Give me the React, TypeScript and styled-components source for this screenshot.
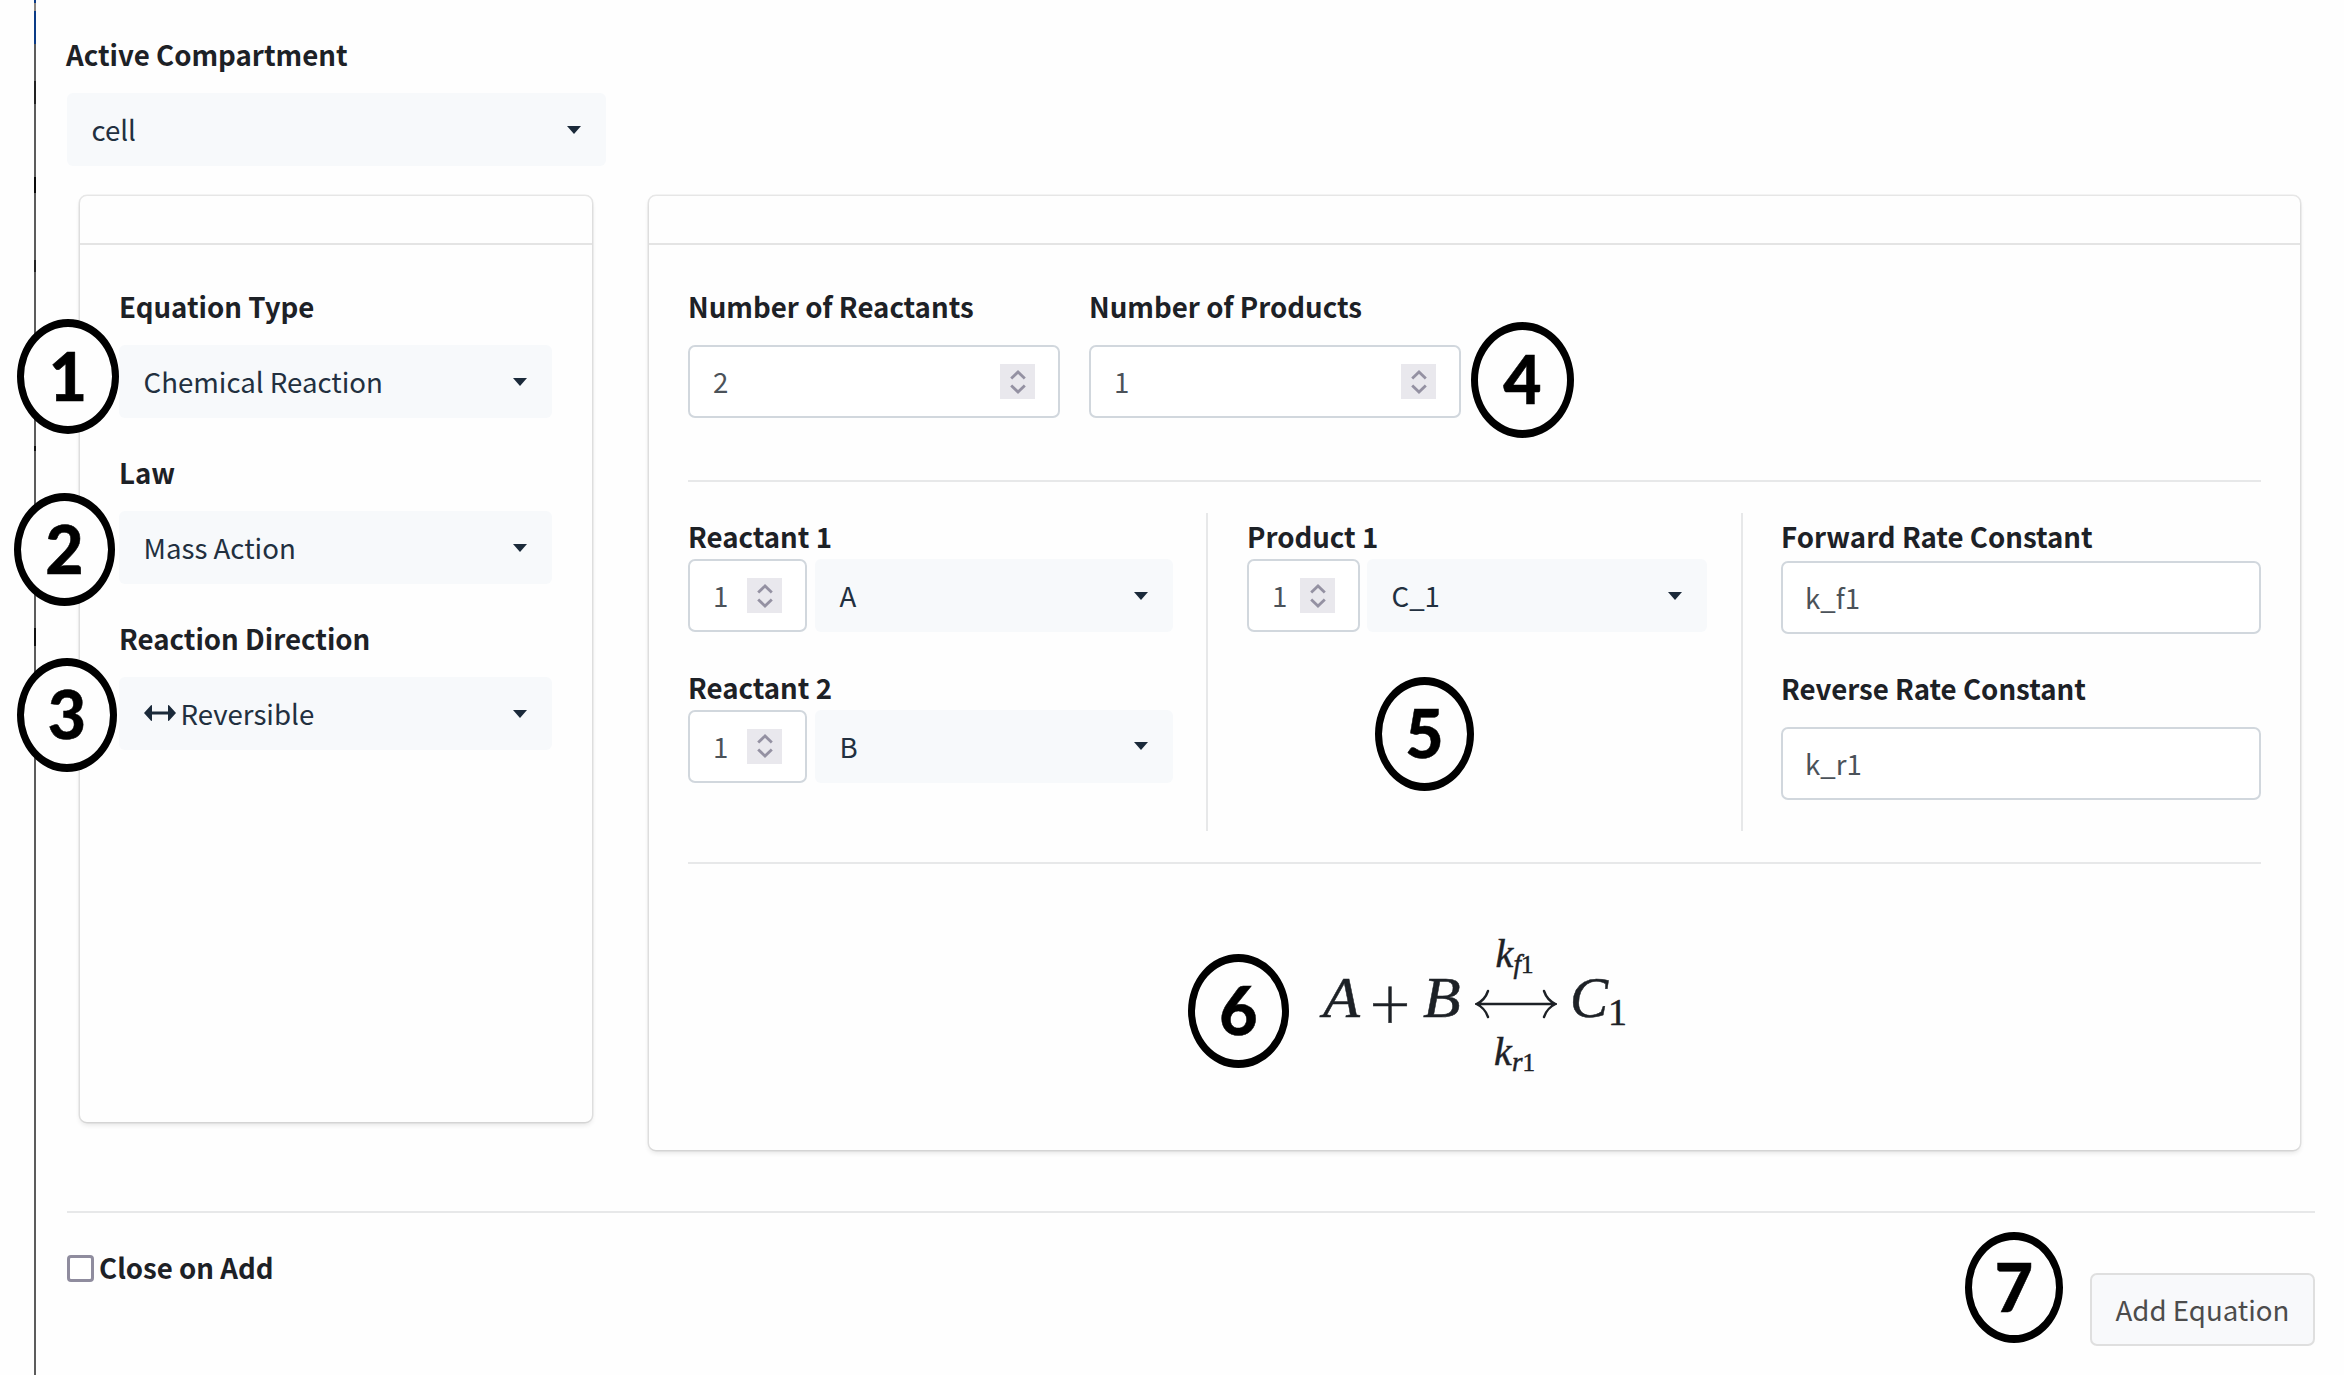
import React from 'react';
import styled, { createGlobalStyle } from 'styled-components';

const GlobalStyle = createGlobalStyle`
  *, *::before, *::after { box-sizing: border-box; }
  body {
    margin: 0;
    background: #fefefe;
    color: #1d2126;
    font-family: 'Noto Sans CJK SC', 'Noto Sans', sans-serif;
    font-size: 27.65px;
  }
`;

const Page = styled.div`
  position: relative;
  display: flex;
  width: 2344px;
  height: 1375px;
  overflow: hidden;
  padding-left: 34px;
`;

const Edge = styled.div`
  width: 2px;
  flex: none;
  background: linear-gradient(
    to bottom,
    #0b3b86 0 3px, #8a8580 3px 11px, #0b3b86 11px 44px, #5c5c5c 44px 81px, #222 81px 104px,
    #5c5c5c 104px 177px, #0a0a0a 177px 193px, #5c5c5c 193px 260px, #222 260px 272px, #5c5c5c 272px 446px,
    #111 446px 451px, #5c5c5c 451px 628px, #111 628px 646px, #5c5c5c 646px
  );
`;

const Panel = styled.main`
  display: flex;
  flex-direction: column;
  width: 2279px;
  padding: 34px 0 0 31px;
`;

const Label = styled.label<{ $gap?: number; $shift?: number }>`
  display: block;
  height: 40px;
  margin: 0 0 ${p => p.$gap ?? 19}px ${p => p.$shift ?? 0}px;
  line-height: 40px;
  font-weight: 700;
  white-space: nowrap;
`;

const SelectBox = styled.div<{ $w?: number }>`
  display: flex;
  align-items: center;
  ${p => (p.$w ? `width: ${p.$w}px;` : 'flex: 1;')}
  height: 73px;
  padding: 0 25.5px 0 24.5px;
  border-radius: 6px;
  background: #f7f9fb;
  color: #22303f;
  line-height: 40px;
`;

const SelectText = styled.span`
  flex: 1;
  padding-bottom: 1px;
  white-space: nowrap;
`;

const Caret = styled.i`
  border: 7px solid transparent;
  border-top: 8px solid #1b2a3a;
  border-bottom: 0;
`;

const InputBox = styled.div<{ $w?: number }>`
  display: flex;
  align-items: center;
  justify-content: space-between;
  ${p => (p.$w ? `width: ${p.$w}px;` : '')}
  height: 73px;
  padding: 0 23px 1px ${p => (p.$w ? 23 : 22)}px;
  border: 2px solid #d1d7dd;
  border-radius: 7px;
  background: #fff;
  color: #4b5259;
  line-height: 40px;
`;

const SpinnerBox = styled.span`
  display: grid;
  place-items: center;
  width: 35px;
  height: 35px;
  margin-top: 1px;
  background: #e9e8ed;
`;

const Cards = styled.div`
  display: flex;
  align-items: flex-start;
  gap: 57px;
  margin-top: 30px;
  padding-left: 13px;
`;

const Card = styled.section<{ $w: number; $h: number }>`
  width: ${p => p.$w}px;
  height: ${p => p.$h}px;
  border-radius: 7px;
  background: #fefefe;
  box-shadow: 0 3px 5px rgba(10, 10, 10, 0.1), 0 0 0 1.5px rgba(10, 10, 10, 0.09);
`;

const CardHeader = styled.header`
  height: 49px;
  border-bottom: 2px solid #e4e4e4;
`;

const TypeFields = styled.div`
  display: flex;
  flex-direction: column;
  gap: 34px;
  padding: 41px 40px 0 39px;
`;

const Field = styled.div`
  display: flex;
  flex-direction: column;
`;

const FieldSelect = styled.div`
  display: flex;
`;

const CountRow = styled.div`
  display: flex;
  gap: 29px;
  padding: 41px 39px 62px;
`;

const Rule = styled.hr<{ $inset?: number }>`
  height: 2px;
  margin: 0 ${p => p.$inset ?? 0}px;
  border: 0;
  background: #e7e8e9;
`;

const Columns = styled.div`
  display: grid;
  grid-template-columns: 520px 534.5px 1fr;
  height: 318px;
  margin: 31px 39px 31px 39px;
`;

const Column = styled.div<{ $gap?: number; $line?: boolean; $pad?: number }>`
  display: flex;
  flex-direction: column;
  gap: ${p => p.$gap ?? 34}px;
  padding: 3px 0 0 ${p => p.$pad ?? 0}px;
  ${p => (p.$line ? 'border-right: 2px solid #e7e8e9;' : '')}
`;

const Species = styled.div<{ $gap: number; $w: number }>`
  display: flex;
  gap: ${p => p.$gap}px;
  width: ${p => p.$w}px;
`;

const Formula = styled.div`
  display: flex;
  align-items: center;
  height: 146px;
  margin-top: 67px;
  padding-left: 674px;
  color: #1d2126;
  font-family: 'Liberation Serif', serif;
  -webkit-text-stroke: 0.5px currentColor;
`;

const Sym = styled.span<{ $ml?: number; $stretch?: number }>`
  width: 35px;
  margin-left: ${p => p.$ml ?? 0}px;
  padding-bottom: 13px;
  font-size: 57px;
  font-style: italic;
  line-height: 60px;
  white-space: nowrap;
  transform: scaleX(${p => p.$stretch ?? 1});
  transform-origin: left;
`;

const Plus = styled.span`
  width: 63px;
  padding: 0 0 9px 1px;
  font-family: 'Noto Sans CJK SC', sans-serif;
  font-size: 75px;
  font-weight: 100;
  line-height: 60px;
  text-align: center;
`;

const Sub = styled.sub<{ $s: number; $drop: number; $roman?: boolean }>`
  font-size: ${p => p.$s}px;
  font-style: ${p => (p.$roman ? 'normal' : 'italic')};
  line-height: 0;
  vertical-align: -${p => p.$drop}px;
`;

const ArrowStack = styled.span`
  display: flex;
  flex-direction: column;
  align-items: center;
  width: 82px;
  height: 146px;
  margin-left: 17px;
`;

const RateLabel = styled.span`
  height: 44px;
  padding-right: 3px;
  font-size: 40px;
  font-style: italic;
  line-height: 46px;
`;

const ArrowDrawing = styled.svg`
  flex: none;
  width: 82px;
  height: 40px;
  margin: 9px 0 5px;
`;

const FooterRule = styled(Rule)`
  margin-top: 61px;
`;

const Footer = styled.footer`
  display: flex;
  justify-content: space-between;
  align-items: flex-start;
`;

const CheckRow = styled.label`
  display: flex;
  align-items: center;
  gap: 5px;
  height: 40px;
  margin-top: 34px;
  line-height: 40px;
  font-weight: 700;
`;

const CheckSquare = styled.span`
  width: 27px;
  height: 27px;
  margin-top: 3px;
  border: 3px solid #8f8c9e;
  border-radius: 4px;
  background: #fff;
`;

const AddButton = styled.button`
  width: 225px;
  height: 73px;
  margin-top: 60px;
  padding: 0 0 2px;
  border: 2px solid #dfdfdf;
  border-radius: 7px;
  background: #f8f9fb;
  color: #4c4c4c;
  font: inherit;
  line-height: 40px;
`;

const Badge = styled.span<{ $x: number; $y: number; $w: number; $h: number }>`
  position: absolute;
  left: ${p => p.$x}px;
  top: ${p => p.$y}px;
  display: grid;
  place-items: center;
  width: ${p => p.$w}px;
  height: ${p => p.$h}px;
  padding-bottom: 2px;
  border: solid #000;
  border-width: 8px 7.5px;
  border-radius: 50%;
  background: #fefefe;
  color: #000;
  font: 900 66px/66px Lato, sans-serif;
  -webkit-text-stroke: 0.5px #000;
`;

const Select = ({ children, w }: { children: React.ReactNode; w?: number }) => (
  <SelectBox $w={w}>
    <SelectText>{children}</SelectText>
    <Caret />
  </SelectBox>
);

const NumberInput = ({ value, w }: { value: number; w: number }) => (
  <InputBox $w={w}>
    <span>{value}</span>
    <SpinnerBox>
      <svg width="16" height="24" viewBox="0 0 16 24" fill="none" stroke="#9491a2" strokeWidth="2.8">
        <path d="M1.2 8.6 8 2l6.8 6.6M1.2 15.4 8 22l6.8-6.6" />
      </svg>
    </SpinnerBox>
  </InputBox>
);

const BothWays = styled.svg`
  width: 32px;
  height: 18px;
  margin: 0 5px 0 0;
  vertical-align: 3px;
`;

const BothWaysIcon = () => (
  <BothWays viewBox="0 0 32 18" fill="#1b2a3a">
    <path d="M0 9 7 1.2Q8 .6 8 2v5.5h16V2q0-1.4 1-.8L32 9l-7 7.8q-1 .6-1-.8v-5.5H8V16q0 1.4-1 .8z" />
  </BothWays>
);

const badges = [
  { x: 17, y: 319, w: 102, h: 115 },
  { x: 14, y: 493, w: 101, h: 113 },
  { x: 17, y: 658, w: 100, h: 114 },
  { x: 1471, y: 322, w: 103, h: 116 },
  { x: 1375, y: 677, w: 99, h: 114 },
  { x: 1188, y: 954, w: 101, h: 114 },
  { x: 1965, y: 1232, w: 98, h: 111 },
];

export default function App() {
  return (
    <Page>
      <GlobalStyle />
      <Edge />
      <Panel>
        <Label $shift={-1}>Active Compartment</Label>
        <Select w={539}>cell</Select>
        <Cards>
          <Card $w={512} $h={926}>
            <CardHeader />
            <TypeFields>
              <Field>
                <Label>Equation Type</Label>
                <FieldSelect><Select>Chemical Reaction</Select></FieldSelect>
              </Field>
              <Field>
                <Label>Law</Label>
                <FieldSelect><Select>Mass Action</Select></FieldSelect>
              </Field>
              <Field>
                <Label>Reaction Direction</Label>
                <FieldSelect><Select><BothWaysIcon />Reversible</Select></FieldSelect>
              </Field>
            </TypeFields>
          </Card>
          <Card $w={1651} $h={954}>
            <CardHeader />
            <CountRow>
              <Field>
                <Label>Number of Reactants</Label>
                <NumberInput value={2} w={372} />
              </Field>
              <Field>
                <Label>Number of Products</Label>
                <NumberInput value={1} w={372} />
              </Field>
            </CountRow>
            <Rule $inset={39} />
            <Columns>
              <Column $line $gap={34.5}>
                <Field>
                  <Label $gap={3}>Reactant 1</Label>
                  <Species $gap={8} $w={485}>
                    <NumberInput value={1} w={119} />
                    <Select>A</Select>
                  </Species>
                </Field>
                <Field>
                  <Label $gap={3}>Reactant 2</Label>
                  <Species $gap={8} $w={485}>
                    <NumberInput value={1} w={119} />
                    <Select>B</Select>
                  </Species>
                </Field>
              </Column>
              <Column $line $pad={39}>
                <Field>
                  <Label $gap={3}>Product 1</Label>
                  <Species $gap={7} $w={460}>
                    <NumberInput value={1} w={113} />
                    <Select>C_1</Select>
                  </Species>
                </Field>
              </Column>
              <Column $pad={38.5}>
                <Field>
                  <Label $gap={5}>Forward Rate Constant</Label>
                  <InputBox>k_f1</InputBox>
                </Field>
                <Field>
                  <Label>Reverse Rate Constant</Label>
                  <InputBox>k_r1</InputBox>
                </Field>
              </Column>
            </Columns>
            <Rule $inset={39} />
            <Formula>
              <Sym $stretch={1.06}>A</Sym>
              <Plus>+</Plus>
              <Sym $ml={2} $stretch={1.08}>B</Sym>
              <ArrowStack>
                <RateLabel>k<Sub $s={27} $drop={6}>f</Sub><Sub $s={25} $drop={6} $roman>1</Sub></RateLabel>
                <ArrowDrawing viewBox="0 0 82 40" fill="none" stroke="#1d2126" strokeWidth="2.4" strokeLinecap="round">
                  <path d="M2 20h78M13 7C11 13 7 17.5 1.5 20 7 22.5 11 27 13 33M69 7c2 6 6 10.5 11.5 13C75 22.5 71 27 69 33" />
                </ArrowDrawing>
                <RateLabel>k<Sub $s={27} $drop={6}>r</Sub><Sub $s={25} $drop={6} $roman>1</Sub></RateLabel>
              </ArrowStack>
              <Sym $ml={13}>C<Sub $s={38} $drop={8} $roman>1</Sub></Sym>
            </Formula>
          </Card>
        </Cards>
        <FooterRule />
        <Footer>
          <CheckRow><CheckSquare />Close on Add</CheckRow>
          <AddButton>Add Equation</AddButton>
        </Footer>
      </Panel>
      {badges.map((b, i) => (
        <Badge key={i} $x={b.x} $y={b.y} $w={b.w} $h={b.h}>{i + 1}</Badge>
      ))}
    </Page>
  );
}
